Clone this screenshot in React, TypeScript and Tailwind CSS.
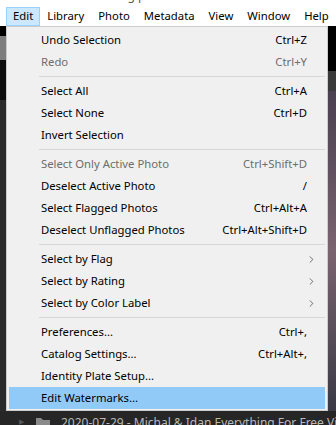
import { ChevronRight } from "lucide-react";

type Item =
  | { sep: true }
  | { label: string; shortcut?: string; disabled?: boolean; submenu?: boolean; active?: boolean };

const items: Item[] = [
  { label: "Undo Selection", shortcut: "Ctrl+Z" },
  { label: "Redo", shortcut: "Ctrl+Y", disabled: true },
  { sep: true },
  { label: "Select All", shortcut: "Ctrl+A" },
  { label: "Select None", shortcut: "Ctrl+D" },
  { label: "Invert Selection" },
  { sep: true },
  { label: "Select Only Active Photo", shortcut: "Ctrl+Shift+D", disabled: true },
  { label: "Deselect Active Photo", shortcut: "/" },
  { label: "Select Flagged Photos", shortcut: "Ctrl+Alt+A" },
  { label: "Deselect Unflagged Photos", shortcut: "Ctrl+Alt+Shift+D" },
  { sep: true },
  { label: "Select by Flag", submenu: true },
  { label: "Select by Rating", submenu: true },
  { label: "Select by Color Label", submenu: true },
  { sep: true },
  { label: "Preferences...", shortcut: "Ctrl+," },
  { label: "Catalog Settings...", shortcut: "Ctrl+Alt+," },
  { label: "Identity Plate Setup..." },
  { label: "Edit Watermarks...", active: true },
];

const menus = ["Edit", "Library", "Photo", "Metadata", "View", "Window", "Help"];

const font = { fontFamily: '"Noto Sans", "Open Sans", sans-serif' };

export default function App() {
  return (
    <div
      className="relative w-[336px] h-[425px] overflow-hidden bg-[#1c1c1c] text-[11.3px]"
      style={font}
    >
      {/* title bar remnant + menu bar */}
      <div className="h-[7px] bg-white overflow-hidden">
        <div className="ml-[120px] -mt-[12px] text-[12px] leading-[16px] text-[#555]">ng photos</div>
      </div>
      <div className="flex h-[19px] bg-white pl-[6px]">
        {menus.map((m, i) => (
          <div
            key={m}
            className={
              i === 0
                ? "flex items-center px-[6px] border border-[#99d1ff] bg-[#cce8ff] text-black"
                : "flex items-center px-[7px] text-black"
            }
          >
            {m}
          </div>
        ))}
      </div>

      {/* app behind the menu */}
      <div className="flex h-[385px]">
        <div className="w-[6px] flex flex-col">
          <div className="h-[10px] bg-black" />
          <div className="h-[24px] bg-[#7d7d7d]" />
          <div className="h-[40px] bg-[#0d0d0d]" />
          <div className="flex-1 bg-[#2a2a2a]" />
        </div>
        <div className="flex-1" />
        <div className="w-[8px] flex flex-col">
          <div className="h-[45px] bg-black" />
          <div className="h-[20px] bg-[#3a3a3a]" />
          <div className="flex-1 bg-linear-to-b from-[#4a4050] via-[#7a6470] to-[#3a3a44]" />
        </div>
      </div>
      <div className="flex items-start h-[15px] bg-[#262626] pl-[19px] text-[#b9b9b9] whitespace-nowrap overflow-hidden">
        <span className="shrink-0 text-[#555] text-[7px] mt-[6px] mr-[11px]">▶</span>
        <svg width="16" height="12" viewBox="0 0 16 12" className="shrink-0 mr-[10px] mt-[5px]">
          <path d="M1 2h5l2 2h7v8H1z" fill="#8a8a8a" />
        </svg>
        <span className="shrink-0 text-[12px] mt-[3px]">2020-07-29 - Michal &amp; Idan Everything For Free Video</span>
      </div>

      {/* dropdown */}
      <div className="absolute left-[6px] top-[26px] w-[322px] h-[385px] bg-[#f0f0f0] border border-[#cccccc] py-[2px] px-[2px]">
        {items.map((it, i) =>
          "sep" in it ? (
            <div key={i} className="h-[7px] flex items-center pl-[30px]">
              <div className="h-px w-full bg-[#d7d7d7]" />
            </div>
          ) : (
            <div
              key={i}
              className={
                "flex items-center h-[22px] pl-[32px] pr-[18px] " +
                (it.active ? "bg-[#91c9f7] " : "") +
                (it.disabled ? "text-[#6d6d6d]" : "text-black")
              }
            >
              <span className="flex-1">{it.label}</span>
              {it.shortcut && <span>{it.shortcut}</span>}
              {it.submenu && (
                <ChevronRight size={11} strokeWidth={1.5} className="-mr-[10px] text-[#333]" />
              )}
            </div>
          )
        )}
      </div>
    </div>
  );
}
